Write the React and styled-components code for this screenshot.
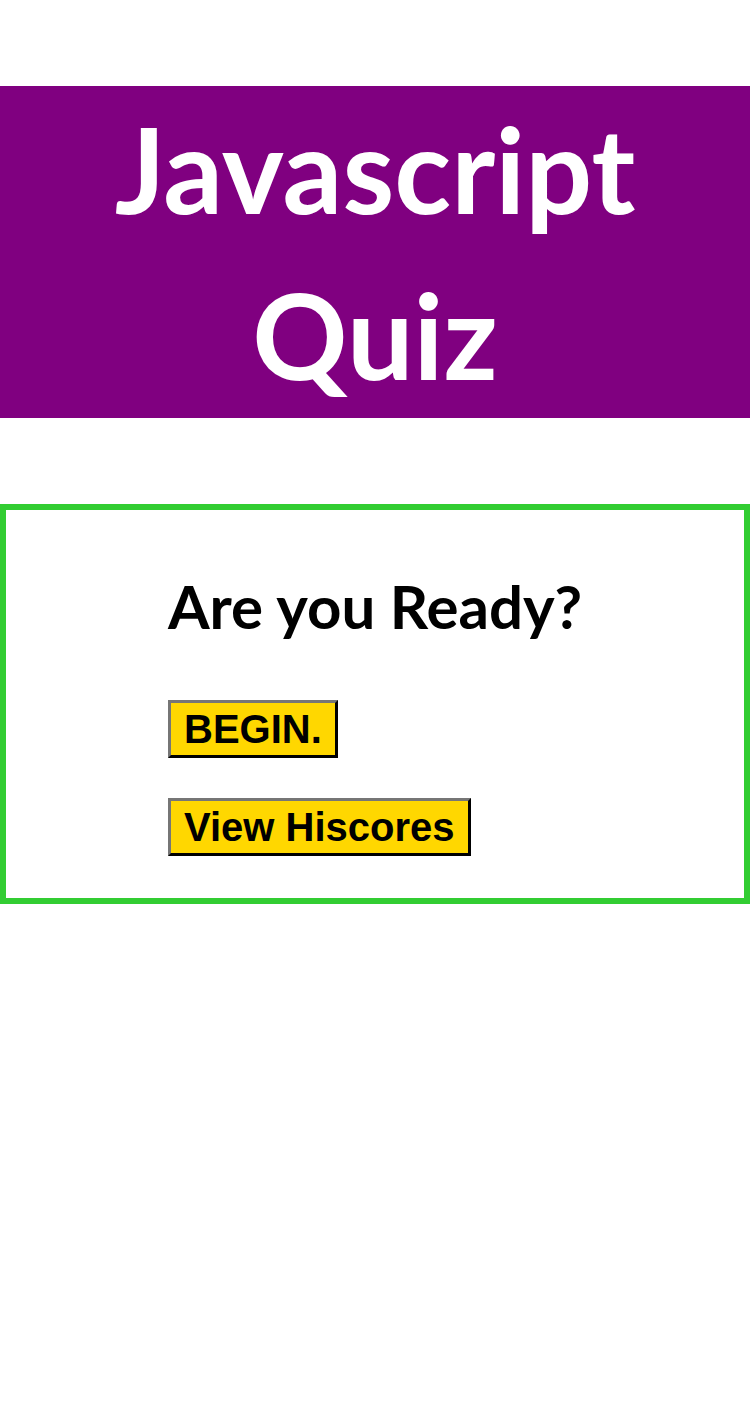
import React from "react";
import styled, { createGlobalStyle } from "styled-components";

const GlobalStyle = createGlobalStyle`
    body {
        margin: 0;
        background: #ffffff;
        font-family: "Lato", "Liberation Sans", sans-serif;
    }
`

const Page = styled.div`
    padding-top: 86px;
`

const Header = styled.header`
    background-color: #800080;
    display: flex;
    justify-content: center;
`

const Title = styled.h1`
    margin: 0;
    width: 560px;
    color: #ffffff;
    font-family: "Lato", sans-serif;
    font-weight: 700;
    font-size: 118px;
    line-height: 166px;
    text-align: center;
`

const Card = styled.section`
    margin-top: 86px;
    border: 6px solid #32cd32;
    padding: 62px 0 42px 162px;
    display: flex;
    flex-direction: column;
    align-items: flex-start;
`

const Question = styled.h2`
    margin: 0 0 60px 0;
    color: #000000;
    font-family: "Lato", sans-serif;
    font-weight: 700;
    font-size: 60px;
    line-height: 68px;
`

const Button = styled.button`
    box-sizing: border-box;
    height: 58px;
    background-color: #ffd700;
    color: #000000;
    border: 3px outset #767676;
    border-right-color: #222222;
    border-bottom-color: #222222;
    padding: 0 13px;
    margin-bottom: ${props => props.$gap || 0}px;
    font-family: "Liberation Sans", Arial, sans-serif;
    font-weight: 700;
    font-size: 40px;
    line-height: 46px;
    cursor: pointer;
`

function App() {
    return (
        <Page>
            <GlobalStyle />
            <Header>
                <Title>Javascript Quiz</Title>
            </Header>
            <Card>
                <Question>Are you Ready?</Question>
                <Button $gap={40}>BEGIN.</Button>
                <Button>View Hiscores</Button>
            </Card>
        </Page>
    )
}

export default App;
